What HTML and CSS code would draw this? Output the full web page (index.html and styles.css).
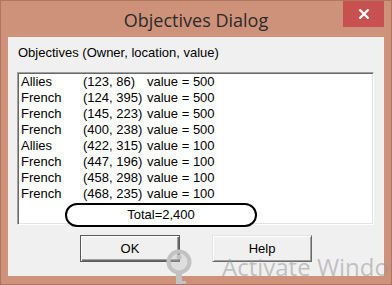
FILE: index.html
```html
<!DOCTYPE html>
<html lang="en">
<head>
    <meta charset="UTF-8">
    <title>Objectives Dialog</title>
    <link rel="stylesheet" href="styles.css">
</head>
<body>
    <div class="window">
        <div class="titlebar">
            <span></span>
            <span class="title">Objectives Dialog</span>
            <button class="close" aria-label="Close">
                <svg width="12" height="10" viewBox="0 0 12 10">
                    <path d="M1.5 0.5 L10.5 9.5 M10.5 0.5 L1.5 9.5" stroke="#fff" stroke-width="2.2"/>
                </svg>
            </button>
        </div>

        <div class="client">
            <div class="label">Objectives (Owner, location, value)</div>

            <div class="listbox">
                <div class="row"><span class="owner">Allies</span><span class="loc">(123, 86)</span><span>value = 500</span></div>
                <div class="row"><span class="owner">French</span><span class="loc">(124, 395)</span><span>value = 500</span></div>
                <div class="row"><span class="owner">French</span><span class="loc">(145, 223)</span><span>value = 500</span></div>
                <div class="row"><span class="owner">French</span><span class="loc">(400, 238)</span><span>value = 500</span></div>
                <div class="row"><span class="owner">Allies</span><span class="loc">(422, 315)</span><span>value = 100</span></div>
                <div class="row"><span class="owner">French</span><span class="loc">(447, 196)</span><span>value = 100</span></div>
                <div class="row"><span class="owner">French</span><span class="loc">(458, 298)</span><span>value = 100</span></div>
                <div class="row"><span class="owner">French</span><span class="loc">(468, 235)</span><span>value = 100</span></div>
                <div class="total">Total=2,400</div>
            </div>

            <div class="buttons">
                <button class="btn default">OK</button>
                <button class="btn">Help</button>
            </div>
        </div>

        <!-- windows activation watermark -->
        <div class="watermark">
            <svg class="key" width="30" height="40" viewBox="0 0 30 40">
                <circle cx="14" cy="13" r="10.5" fill="rgba(190,190,190,0.35)" stroke="#c2c2c2" stroke-width="4"/>
                <circle cx="14" cy="8" r="2.5" fill="#c2c2c2"/>
                <path d="M11 25 L11 40 L17 40 L17 36 L21 36 L21 32 L17 32 L17 25 Z" fill="#c2c2c2"/>
            </svg>
            <span class="wm-text">Activate Windows</span>
        </div>
    </div>
</body>
</html>
```

FILE: styles.css
```css
html, body {
    margin: 0;
    padding: 0;
}
body {
    width: 392px;
    height: 285px;
    overflow: hidden;
    font-family: "Liberation Sans", Arial, sans-serif;
}
.window {
    position: relative;
    box-sizing: border-box;
    width: 392px;
    height: 285px;
    background: #ce927a;
    border: 1px solid #b27562;
    overflow: hidden;
}
.titlebar {
    display: grid;
    grid-template-columns: 1fr auto 1fr;
    align-items: start;
    height: 36px;
}
.title {
    font-family: "Open Sans", "Noto Sans", sans-serif;
    font-size: 18px;
    color: #2b2b2b;
    line-height: 20px;
    padding-top: 9px;
}
.close {
    justify-self: end;
    width: 41px;
    height: 26px;
    margin-right: 7px;
    border: none;
    padding: 0;
    background: #c75050;
    display: flex;
    align-items: center;
    justify-content: center;
}
.client {
    box-sizing: border-box;
    height: 239px;
    margin: 0 7px 0 7px;
    padding: 8px 10px 0 9px;
    background: #f0f0f0;
    font-size: 13px;
    color: #000;
}
.label {
    line-height: 16px;
    padding-left: 1px;
    height: 27px;
}
.listbox {
    box-sizing: border-box;
    height: 153px;
    background: #fff;
    border-top: 1px solid #a0a0a0;
    border-left: 1px solid #a0a0a0;
    border-right: 1px solid #fff;
    border-bottom: 1px solid #fff;
    box-shadow: inset 1px 1px 0 #696969, inset -1px -1px 0 #e3e3e3;
    padding: 1px 0 0 3px;
}
.row {
    display: flex;
    height: 16px;
    line-height: 16px;
}
.owner {
    width: 62px;
}
.loc {
    width: 64px;
}
.total {
    position: relative;
    box-sizing: border-box;
    width: 192px;
    height: 24px;
    margin: 1px 0 0 44px;
    background: #fff;
    border: 2px solid #000;
    border-radius: 12px;
    text-align: center;
    line-height: 20px;
}
.buttons {
    display: flex;
    justify-content: center;
    gap: 32px;
    margin-top: 10px;
    padding-left: 1px;
}
.btn {
    box-sizing: border-box;
    width: 100px;
    height: 27px;
    font-family: "Liberation Sans", Arial, sans-serif;
    font-size: 13px;
    color: #000;
    background: #f0f0f0;
    border: 1px solid;
    border-color: #e3e3e3 #696969 #696969 #e3e3e3;
    box-shadow: inset 1px 1px 0 #fff, inset -1px -1px 0 #a0a0a0;
    padding: 0;
}
.btn.default {
    border: 1px solid #5a5a5a;
    box-shadow: inset 1px 1px 0 #fff, inset -1px -1px 0 #696969, inset -2px -2px 0 #a0a0a0;
}
.watermark {
    position: absolute;
    left: 164px;
    top: 248px;
    display: flex;
    align-items: flex-start;
    gap: 27px;
    pointer-events: none;
    white-space: nowrap;
}
.wm-text {
    font-family: "Open Sans", "Noto Sans", sans-serif;
    font-size: 24px;
    color: rgba(150, 150, 150, 0.55);
    line-height: 28px;
    margin-top: 4px;
}
```
